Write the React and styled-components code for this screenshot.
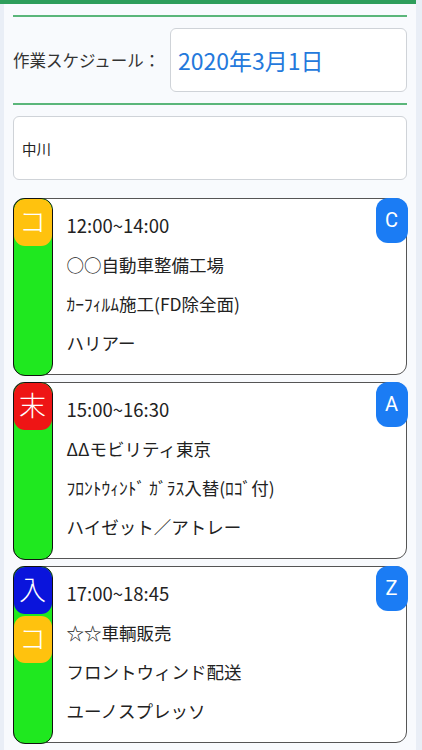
import React from 'react';
import styled, { createGlobalStyle } from 'styled-components';

const GlobalStyle = createGlobalStyle`
  html, body {
    margin: 0;
    padding: 0;
    background: #e9eef6;
    font-family: "Noto Sans CJK JP", "Noto Sans", sans-serif;
  }
`;

const Page = styled.div`
  width: 416px;
  min-height: 750px;
  background: #e9eef6;
`;

const TopBar = styled.div`
  height: 4px;
  background: #2e9e5b;
`;

const Body = styled.div`
  margin-left: 4px;
  background: #f8fafd;
  padding: 11px 9px 8px 9px;
  min-height: 738px;
`;

const Rule = styled.div`
  height: 2px;
  background: #5ab67a;
  margin-bottom: 11px;
`;

const DateRow = styled.div`
  display: flex;
  align-items: center;
  margin-bottom: 11px;
`;

const Label = styled.div`
  width: 157px;
  font-size: 16.5px;
  color: #333;
  white-space: nowrap;
`;

const Field = styled.div`
  flex: 1;
  height: 64px;
  box-sizing: border-box;
  border: 1px solid #cfd3d8;
  border-radius: 6px;
  background: #fff;
  display: flex;
  align-items: center;
  padding-left: ${({ pad }) => pad || 8}px;
  font-size: ${({ size }) => size || 14.5}px;
  color: ${({ color }) => color || '#222'};
`;

const NameField = styled(Field)`
  margin-bottom: 18px;
`;

const CardList = styled.div`
  display: flex;
  flex-direction: column;
  gap: 7px;
`;

const Card = styled.div`
  position: relative;
  display: flex;
  height: 177px;
  box-sizing: border-box;
  border: 1.5px solid #555;
  border-radius: 11px;
  background: #fff;
`;

const Strip = styled.div`
  width: 40px;
  margin: -1.5px 0 -1.5px -1.5px;
  box-sizing: border-box;
  border: 1px solid #111;
  border-radius: 12px;
  background: #1fe81f;
  overflow: hidden;
  display: flex;
  flex-direction: column;
  gap: 2px;
`;

const Tag = styled.div`
  height: 47px;
  border-radius: 11px;
  background: ${({ bg }) => bg};
  color: #fff;
  font-size: 27px;
  font-weight: 300;
  line-height: 44px;
  text-align: center;
`;

const Lines = styled.div`
  padding: 7px 0 0 14px;
  display: flex;
  flex-direction: column;
`;

const Line = styled.div`
  height: 39px;
  line-height: 39px;
  font-size: ${({ size }) => size || 17.5}px;
  color: #222;
  white-space: nowrap;
`;

const Corner = styled.div`
  position: absolute;
  top: -1.5px;
  right: -1.5px;
  width: 32px;
  height: 45px;
  border-radius: 12px;
  background: #1b7cf4;
  color: #fff;
  font-family: Roboto, "Noto Sans", sans-serif;
  font-size: 20px;
  line-height: 44px;
  text-align: center;
`;

const tagColors = {
  コ: '#ffc20e',
  末: '#ee1515',
  入: '#0a14dc',
};

const jobs = [
  {
    tags: ['コ'],
    grade: 'C',
    time: '12:00~14:00',
    client: '○○自動車整備工場',
    work: 'ｶｰﾌｨﾙﾑ施工(FD除全面)',
    car: 'ハリアー',
  },
  {
    tags: ['末'],
    grade: 'A',
    time: '15:00~16:30',
    client: 'ΔΔモビリティ東京',
    work: 'ﾌﾛﾝﾄｳｨﾝﾄﾞ ｶﾞﾗｽ入替(ﾛｺﾞ付)',
    car: 'ハイゼット／アトレー',
  },
  {
    tags: ['入', 'コ'],
    grade: 'Z',
    time: '17:00~18:45',
    client: '☆☆車輌販売',
    work: 'フロントウィンド配送',
    car: 'ユーノスプレッソ',
  },
];

const App = () => {
  return (
    <Page>
      <GlobalStyle />
      <TopBar />
      <Body>
        <Rule />
        <DateRow>
          <Label>作業スケジュール：</Label>
          <Field size={23} color='#2479dc' pad={7}>2020年3月1日</Field>
        </DateRow>
        <Rule />
        <NameField>中川</NameField>
        <CardList>
          {jobs.map((job) => (
            <Card key={job.time}>
              <Strip>
                {job.tags.map((t, i) => (
                  <Tag key={i} bg={tagColors[t]}>{t}</Tag>
                ))}
              </Strip>
              <Lines>
                <Line size={18.5}>{job.time}</Line>
                <Line>{job.client}</Line>
                <Line>{job.work}</Line>
                <Line>{job.car}</Line>
              </Lines>
              <Corner>{job.grade}</Corner>
            </Card>
          ))}
        </CardList>
      </Body>
    </Page>
  );
};

export default App;
